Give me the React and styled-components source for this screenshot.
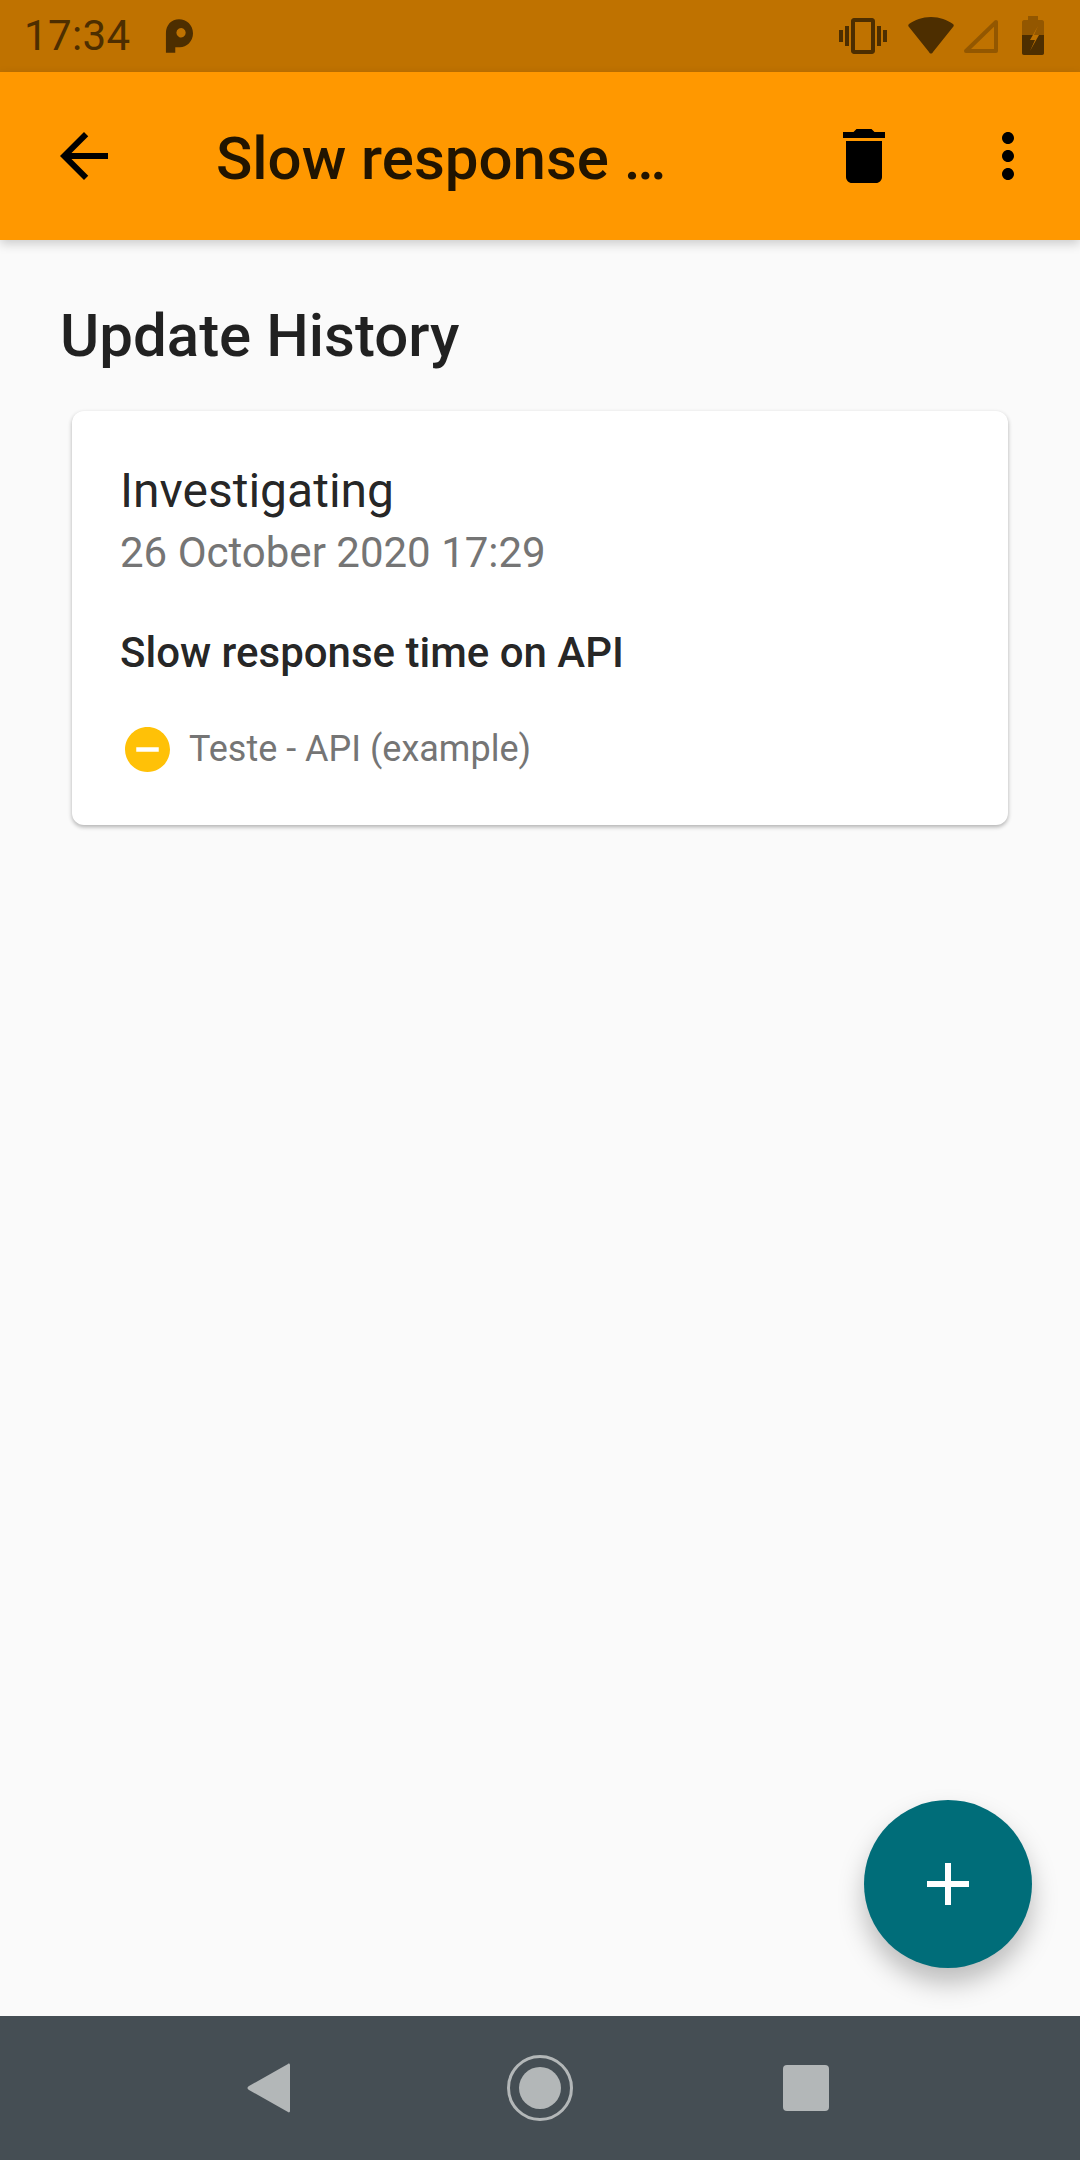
import React from "react"
import styled, { createGlobalStyle } from "styled-components"

const GlobalStyle = createGlobalStyle`
	html, body {
		margin: 0;
		padding: 0;
		background: #fafafa;
	}
	* {
		box-sizing: border-box;
	}
`

const Screen = styled.div`
	display: flex;
	flex-direction: column;
	position: relative;
	width: 1080px;
	height: 2160px;
	overflow: hidden;
	background: #fafafa;
	font-family: Roboto, sans-serif;
`

const StatusBar = styled.div`
	display: flex;
	align-items: center;
	height: 72px;
	padding-left: 24px;
	background: #bf7200;
	color: #4d2e00;
`

const Clock = styled.span`
	font-size: 42px;
	line-height: 72px;
	letter-spacing: 0.4px;
`

const ParkingIcon = styled.svg`
	width: 28px;
	height: 36px;
	margin-left: 34px;
`

const StatusIcons = styled.div`
	display: flex;
	align-items: center;
	margin-left: auto;
	padding-right: 36px;
	gap: 8px;
`

const AppBar = styled.header`
	display: flex;
	align-items: center;
	position: relative;
	z-index: 2;
	height: 168px;
	padding: 0 36px 0 48px;
	background: #ff9800;
	box-shadow: 0 4px 10px rgba(0, 0, 0, 0.18);
`

const AppBarIcon = styled.svg`
	flex: none;
	width: 72px;
	height: 72px;
	margin-left: ${(props) => props.$gap || 0}px;
	fill: #000;
`

const Title = styled.h1`
	flex: none;
	width: 480px;
	margin: 6px 0 0 96px;
	font-size: 60px;
	font-weight: 500;
	line-height: 72px;
	color: rgba(0, 0, 0, 0.87);
	white-space: nowrap;
`

const Content = styled.main`
	flex: 1;
	display: flex;
	flex-direction: column;
	padding: 60px 72px 0;
`

const Heading = styled.h2`
	margin: 0 0 0 -12px;
	font-size: 60px;
	font-weight: 500;
	line-height: 72px;
	color: rgba(0, 0, 0, 0.87);
`

const Card = styled.section`
	display: flex;
	flex-direction: column;
	height: 414px;
	margin-top: 39px;
	padding: 52px 48px 0;
	background: #fff;
	border-radius: 12px;
	box-shadow: 0 2px 4px rgba(0, 0, 0, 0.3);
`

const StatusTitle = styled.div`
	font-size: 48px;
	line-height: 56px;
	color: rgba(0, 0, 0, 0.87);
`

const Timestamp = styled.div`
	font-size: 42px;
	line-height: 50px;
	margin-top: 9px;
	color: #757575;
`

const Message = styled.div`
	margin-top: 50px;
	font-size: 42px;
	font-weight: 500;
	line-height: 50px;
	color: rgba(0, 0, 0, 0.87);
`

const Component = styled.div`
	display: flex;
	align-items: center;
	margin-top: 48px;
	padding-left: 5px;
	gap: 19px;
	font-size: 36px;
	line-height: 46px;
	color: #757575;
`

const ComponentIcon = styled.svg`
	flex: none;
	width: 45px;
	height: 45px;
	fill: #ffc107;
`

const Fab = styled.button`
	display: flex;
	align-items: center;
	justify-content: center;
	position: absolute;
	left: 864px;
	top: 1800px;
	width: 168px;
	height: 168px;
	padding: 0;
	border: 0;
	border-radius: 50%;
	background: #006d79;
	box-shadow: 0 15px 26px rgba(0, 0, 0, 0.25);

	svg {
		width: 72px;
		height: 72px;
		fill: #fff;
	}
`

const NavBar = styled.nav`
	display: flex;
	align-items: center;
	justify-content: center;
	height: 144px;
	gap: 200px;
	background: #454e54;
`

const NavIcon = styled.svg`
	width: 66px;
	height: 66px;
	fill: #b3b7b8;
`

const App = () => {
	return (
		<Screen>
			<GlobalStyle />
			<StatusBar>
				<Clock>17:34</Clock>
				<ParkingIcon viewBox='0 0 30 36' fill='#4d2e00'>
					<path d='M1 36V15C1 6 7 0 15 0s15 6 15 15c0 9-7 15-14 15h-5v6H1zm14-17a5 5 0 1 0 0-9 5 5 0 0 0 0 9z' fillRule='evenodd' />
				</ParkingIcon>
				<StatusIcons>
					<svg width='48' height='48' viewBox='0 0 24 24' fill='#4d2e00'>
						<path d='M0 15h2V9H0v6zm3 2h2V7H3v10zm19-8v6h2V9h-2zm-3 8h2V7h-2v10zM16.5 3h-9C6.67 3 6 3.67 6 4.5v15c0 .83.67 1.5 1.5 1.5h9c.83 0 1.5-.67 1.5-1.5v-15c0-.83-.67-1.5-1.5-1.5zM16 19H8V5h8v14z' />
					</svg>
					<svg width='48' height='48' viewBox='0 0 48 48' fill='#4d2e00' style={{ marginLeft: 12 }}>
						<path d='M24 5c9 0 16 3 22 7 1 1 1 2 0 3L26 40c-1 2-3 2-4 0L2 15c-1-1-1-2 0-3C8 8 15 5 24 5z' />
					</svg>
					<svg width='36' height='48' viewBox='0 0 36 48' fill='none' stroke='#4d2e00' strokeOpacity='0.38' strokeWidth='4' strokeLinejoin='round'>
						<path d='M33 10v29H3z' />
					</svg>
					<svg width='22' height='48' viewBox='0 0 22 48' style={{ marginLeft: 15 }}>
						<path d='M6 4h10v4h4c1 0 2 1 2 2v31c0 1-1 2-2 2H2c-1 0-2-1-2-2V10c0-1 1-2 2-2h4z' fill='#4d2e00' fillOpacity='0.38' />
						<path d='M0 23h22v18c0 1-1 2-2 2H2c-1 0-2-1-2-2z' fill='#4d2e00' />
						<path d='M16 14 8 28h5l-5 11 9-16h-5l4-9z' fill='#bf7200' />
					</svg>
				</StatusIcons>
			</StatusBar>
			<AppBar>
				<AppBarIcon viewBox='0 0 24 24'>
					<path d='M20 11H7.83l5.59-5.59L12 4l-8 8 8 8 1.41-1.41L7.83 13H20v-2z' />
				</AppBarIcon>
				<Title>Slow response …</Title>
				<AppBarIcon viewBox='0 0 24 24' $gap={132}>
					<path d='M6 19c0 1.1.9 2 2 2h8c1.1 0 2-.9 2-2V7H6v12zM19 4h-3.5l-1-1h-5l-1 1H5v2h14V4z' />
				</AppBarIcon>
				<AppBarIcon viewBox='0 0 24 24' $gap={72}>
					<path d='M12 8c1.1 0 2-.9 2-2s-.9-2-2-2-2 .9-2 2 .9 2 2 2zm0 2c-1.1 0-2 .9-2 2s.9 2 2 2 2-.9 2-2-.9-2-2-2zm0 6c-1.1 0-2 .9-2 2s.9 2 2 2 2-.9 2-2-.9-2-2-2z' />
				</AppBarIcon>
			</AppBar>
			<Content>
				<Heading>Update History</Heading>
				<Card>
					<StatusTitle>Investigating</StatusTitle>
					<Timestamp>26 October 2020 17:29</Timestamp>
					<Message>Slow response time on API</Message>
					<Component>
						<ComponentIcon viewBox='2 2 20 20'>
							<path d='M12 2C6.48 2 2 6.48 2 12s4.48 10 10 10 10-4.48 10-10S17.52 2 12 2zm5 11H7v-2h10v2z' />
						</ComponentIcon>
						Teste - API (example)
					</Component>
				</Card>
			</Content>
			<Fab>
				<svg viewBox='0 0 24 24'>
					<path d='M19 13h-6v6h-2v-6H5v-2h6V5h2v6h6v2z' />
				</svg>
			</Fab>
			<NavBar>
				<NavIcon viewBox='0 0 66 66'>
					<path d='M47 9c1-1 2 0 2 1v46c0 1-1 2-2 1L8 35c-2-1-2-3 0-4z' />
				</NavIcon>
				<NavIcon viewBox='0 0 66 66'>
					<circle cx='33' cy='33' r='21' />
					<circle cx='33' cy='33' r='31.5' fill='none' stroke='#b3b7b8' strokeWidth='3' />
				</NavIcon>
				<NavIcon viewBox='0 0 66 66'>
					<rect x='10' y='10' width='46' height='46' rx='4' />
				</NavIcon>
			</NavBar>
		</Screen>
	)
}

export default App
